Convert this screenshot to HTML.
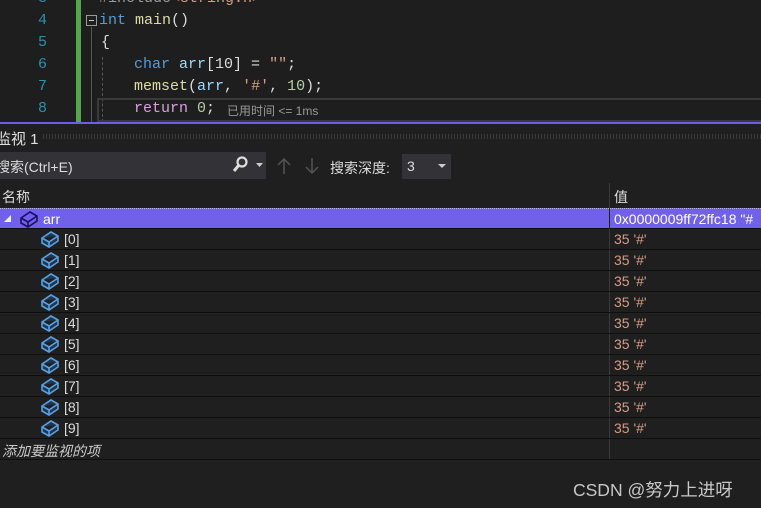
<!DOCTYPE html>
<html><head><meta charset="utf-8"><style>
body{margin:0;width:761px;height:508px;background:#1f1f1f;overflow:hidden;position:relative;font-family:"Liberation Sans","Noto Sans CJK SC",sans-serif;color:#dcdcdc}
.a{position:absolute;white-space:nowrap}
.code{position:absolute;left:0;top:0;width:761px;height:122px;background:#1e1e1e}
.mono{font-family:"Liberation Mono","Noto Sans CJK SC",monospace;font-size:15px}
.ln{color:#2b91af;width:47px;text-align:right;left:0}
.row{position:absolute;left:0;width:761px;height:20px;border-bottom:1px solid #0f0f0f;font-size:14px}
.row .n{position:absolute;left:64px;top:2px}
.row .v{position:absolute;left:614px;top:2px;color:#d69d85}
.sep{position:absolute;left:609px;top:183px;width:1px;height:277px;background:#3a3a3a}
</style></head><body>
<div class="code">
<div class="a" style="left:76px;top:0;width:5px;height:122px;background:#57a64a"></div>
<div class="a mono ln" style="top:-10px">3</div>
<div class="a mono ln" style="top:12px">4</div>
<div class="a mono ln" style="top:34px">5</div>
<div class="a mono ln" style="top:56px">6</div>
<div class="a mono ln" style="top:78px">7</div>
<div class="a mono ln" style="top:100px">8</div>
<div class="a mono" style="left:99px;top:-10px;color:#9b9b9b">#include<span style="color:#d69d85">&lt;string.h&gt;</span></div>
<div class="a" style="left:86px;top:15px;width:9px;height:9px;border:1px solid #999"></div>
<div class="a" style="left:89px;top:20px;width:5px;height:1px;background:#ccc"></div>
<div class="a" style="left:91px;top:27px;width:1px;height:95px;background:#555"></div>
<div class="a mono" style="left:99px;top:12px"><span style="color:#569cd6">int</span> <span style="color:#dcdcaa">main</span>()</div>
<div class="a mono" style="left:101px;top:34px">{</div>
<div class="a" style="left:102px;top:57px;width:0;height:65px;border-left:1px dashed #555"></div>
<div class="a mono" style="left:134px;top:56px"><span style="color:#569cd6">char</span> <span style="color:#9cdcfe">arr</span>[10] = <span style="color:#d69d85">""</span>;</div>
<div class="a mono" style="left:134px;top:78px"><span style="color:#dcdcaa">memset</span>(<span style="color:#9cdcfe">arr</span>, <span style="color:#d69d85">'#'</span>, <span style="color:#b5cea8">10</span>);</div>
<div class="a" style="left:97px;top:98px;width:670px;height:20px;border:2px solid #3a3a3a"></div>
<div class="a mono" style="left:134px;top:100px"><span style="color:#d8a0df">return</span> <span style="color:#b5cea8">0</span>;</div>
<div class="a" style="left:227px;top:102px;font-size:12px;color:#999">已用时间 &lt;= 1ms</div>
</div>
<div class="a" style="left:0;top:122px;width:761px;height:2px;background:#6e5ee0"></div>
<div class="a" style="left:-4px;top:128px;font-size:15px;color:#e0e0e0">监视 1</div>
<div class="a" style="left:43px;top:134px;width:718px;height:5px;background:repeating-linear-gradient(90deg,#3a3a3a 0 1px,transparent 1px 3px)"></div>
<div class="a" style="left:0;top:152px;width:266px;height:27px;background:#333337"></div>
<div class="a" style="left:-4px;top:157px;font-size:14px;color:#dcdcdc">搜索(Ctrl+E)</div>
<svg class="a" style="left:232px;top:156px" width="34" height="18"><circle cx="10" cy="6" r="4.5" stroke="#ddd" stroke-width="2.2" fill="none"/><line x1="7" y1="9" x2="2" y2="15" stroke="#ddd" stroke-width="3"/><path d="M24 7h7l-3.5 4z" fill="#ccc"/></svg>
<svg class="a" style="left:276px;top:156px" width="44" height="20"><path d="M8 18V3M2 9l6-6 6 6" stroke="#555" stroke-width="1.5" fill="none"/><path d="M36 2v15M30 11l6 6 6-6" stroke="#555" stroke-width="1.5" fill="none"/></svg>
<div class="a" style="left:330px;top:158px;font-size:14px">搜索深度:</div>
<div class="a" style="left:402px;top:154px;width:49px;height:25px;background:#333337"></div>
<div class="a" style="left:407px;top:158px;font-size:14px">3</div>
<svg class="a" style="left:438px;top:164px" width="10" height="6"><path d="M0 0h8l-4 4z" fill="#ccc"/></svg>
<div class="a" style="left:2px;top:187px;font-size:14px">名称</div>
<div class="a" style="left:614px;top:187px;font-size:14px">值</div>
<div class="sep"></div>
<div class="row" style="top:208px;background:#7160e8;border-top:1px dotted #bbb;height:19px;color:#fff"><svg class="a" style="left:4px;top:6px" width="8" height="8"><path d="M7 0v7H0z" fill="#eee"/></svg><svg class="a" style="left:19px;top:1px" width="20" height="18"><path d="M2 8l9-6 7 4v5l-9 6-7-4z M2 8l7 4 9-6 M9 12v5" stroke="#1a1060" stroke-width="1.6" fill="none"/></svg><span class="n" style="left:43px">arr</span><span class="v" style="color:#fff">0x0000009ff72ffc18 "#</span></div>
<div class="a" style="left:609px;top:208px;width:1px;height:21px;background:#222"></div>
<div id="rows"></div>
<script>
var h='';for(var i=0;i<10;i++){var t=229+i*21;h+='<div class="row" style="top:'+t+'px"><svg class="a" style="left:40px;top:1px" width="20" height="19"><path d="M2 8l9-6 7 4v5l-9 6-7-4z M2 8l7 4 9-6 M9 12v5" stroke="#5aa0e0" stroke-width="1.6" fill="#1f3550"/></svg><span class="n">['+i+']</span><span class="v">35 \'#\'</span></div>';}
h+='<div class="row" style="top:439px"><span class="n" style="left:2px;font-style:italic;color:#ccc">添加要监视的项</span></div>';
document.getElementById('rows').innerHTML=h;
</script>
<div class="a" style="left:573px;top:477px;font-size:17.5px;color:#c8c8c8">CSDN @努力上进呀</div>
</body></html>
